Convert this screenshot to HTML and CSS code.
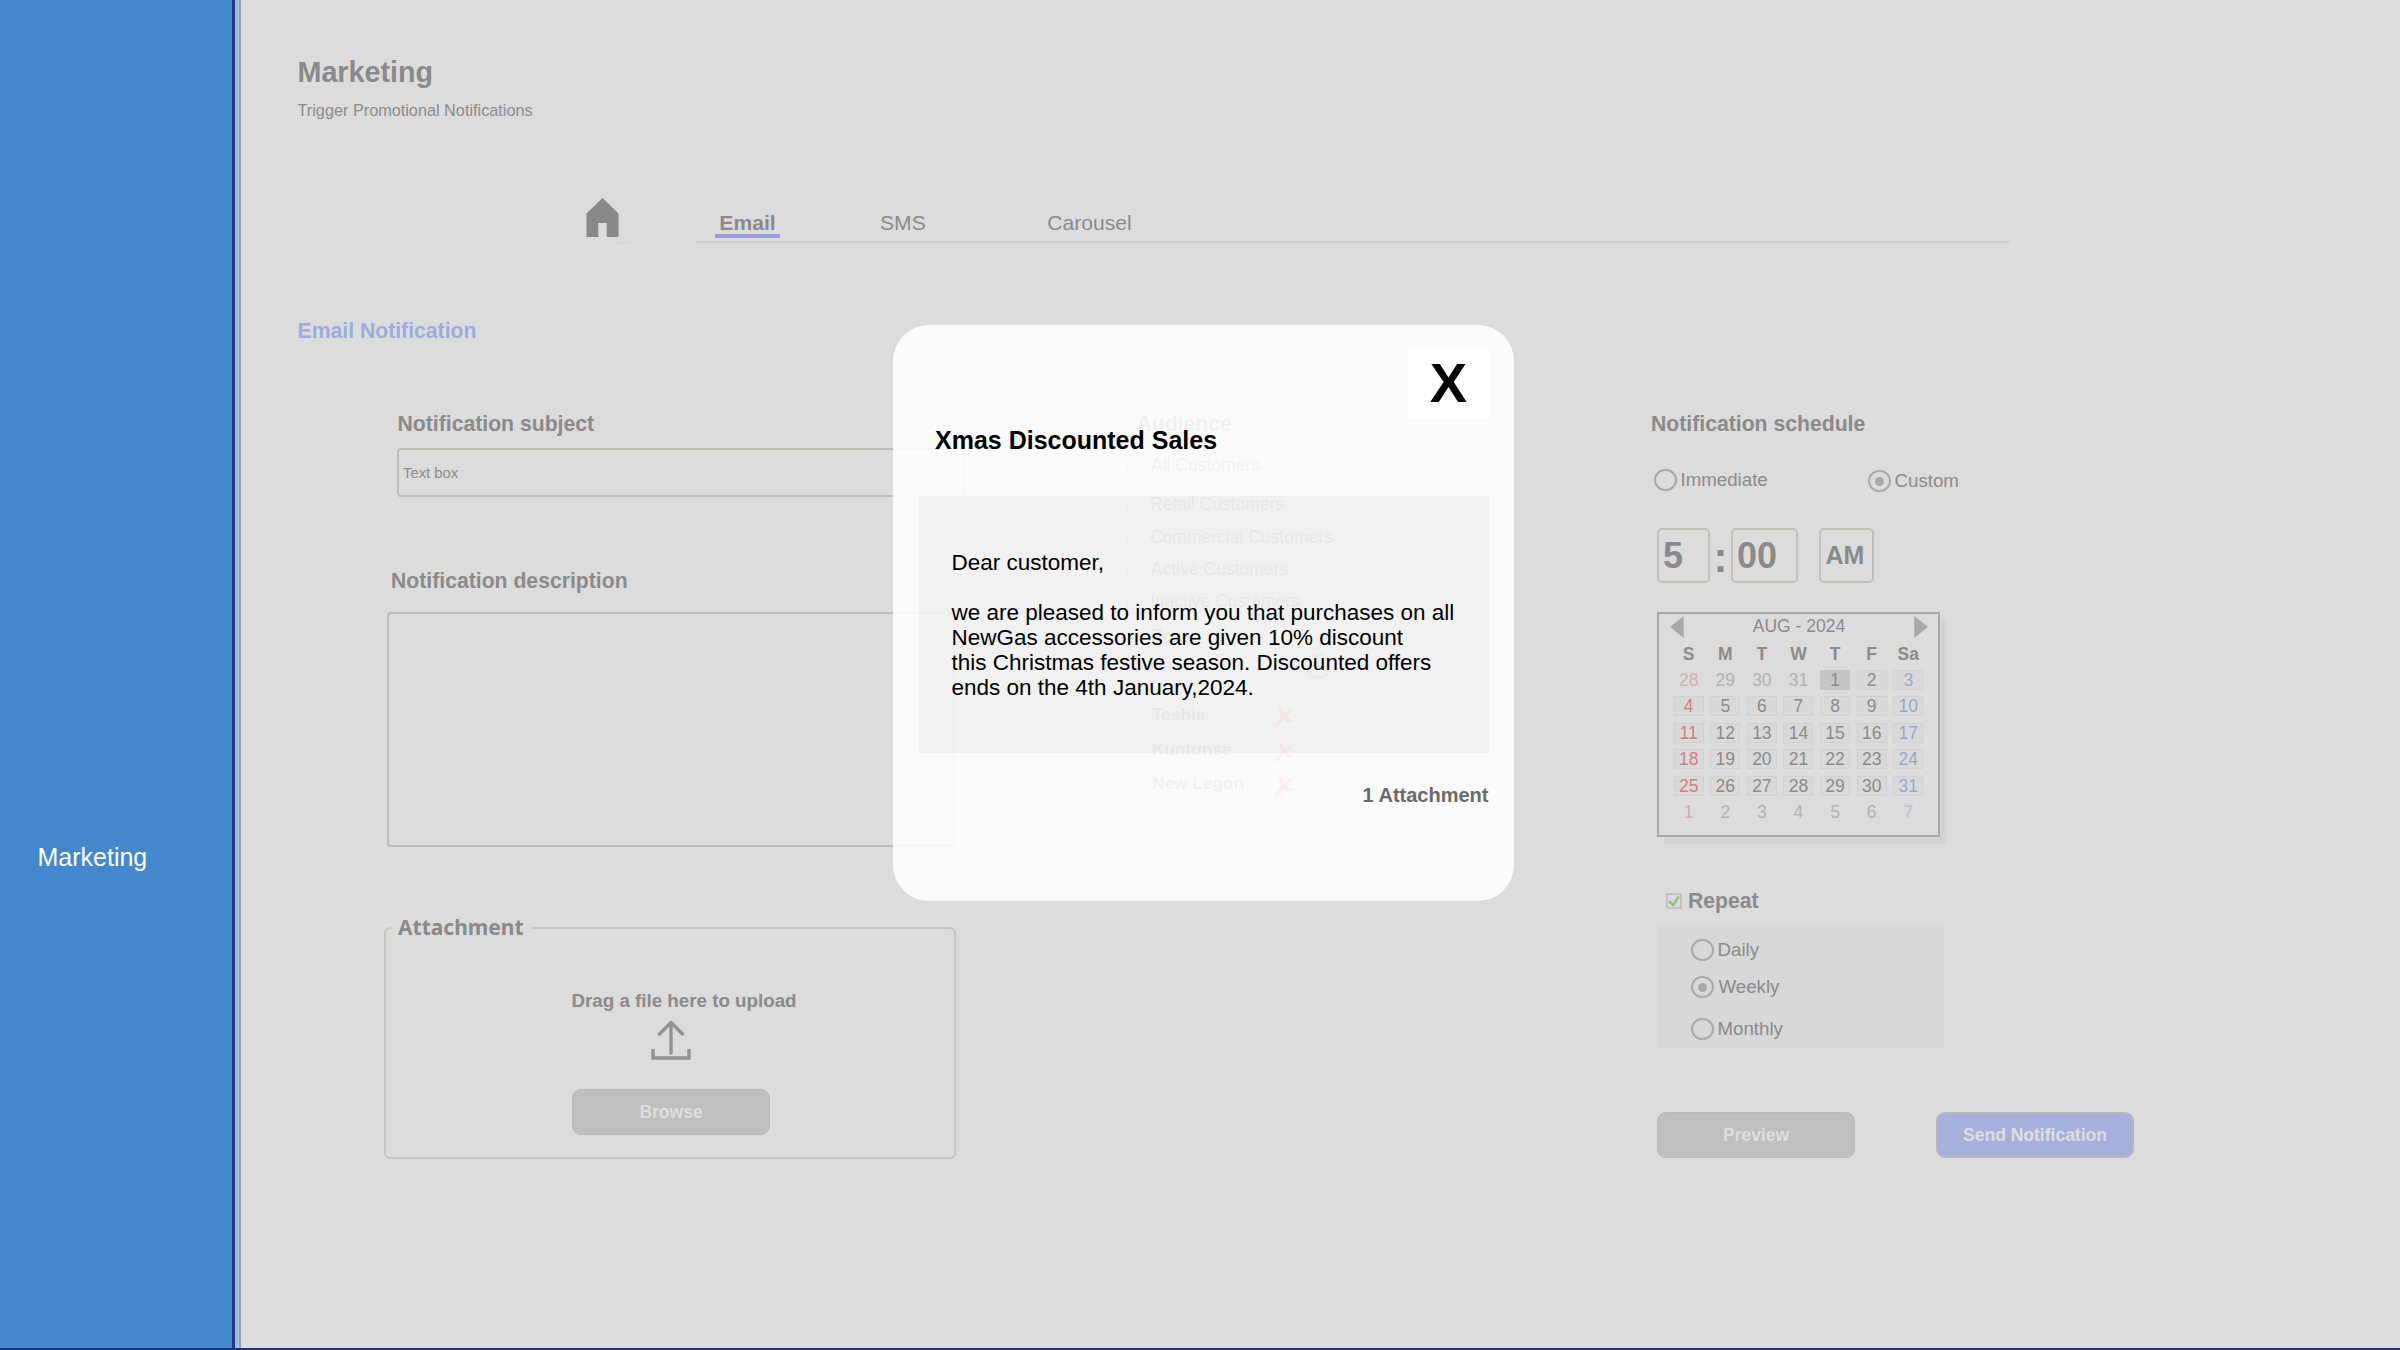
FILE: index.html
```html
<!DOCTYPE html>
<html lang="en">
<head>
<meta charset="utf-8">
<title>Marketing</title>
<link rel="stylesheet" href="styles.css">
</head>
<body>
<div class="app">
  <aside class="sidebar"><a class="sidebar-link">Marketing</a></aside>
  <div class="divider"></div>
  <main class="main">
    <h1>Marketing</h1>
    <p class="subtitle">Trigger Promotional Notifications</p>

    <nav class="nav">
      <svg class="home" width="46" height="48" viewBox="0 0 46 48">
        <path d="M0.5 17.5 16.5 2 32.5 17.5V41H20.7V27H12.3V41H0.5Z" fill="#898989"/>
        <path d="M30 46.7H44" stroke="#d6d6d6" stroke-width="2"/>
      </svg>
      <div class="tabs">
        <a class="tab active">Email</a>
        <a class="tab sms">SMS</a>
        <a class="tab carousel">Carousel</a>
      </div>
    </nav>

    <h2 class="section-title">Email Notification</h2>

    <div class="columns">
      <section class="compose">
        <h3 class="subject-label">Notification subject</h3>
        <div class="input">Text box</div>
        <h3 class="description-label">Notification description</h3>
        <div class="textarea"></div>
        <fieldset class="attachment">
          <legend>Attachment</legend>
          <div class="drop">
            <p>Drag a file here to upload</p>
            <svg width="40" height="41" viewBox="0 0 40 41" fill="none" stroke="#929292" stroke-width="3.4">
              <path d="M20 33V2.5M8.5 14 20 2.5 31.5 14" stroke-linejoin="round" stroke-linecap="round"/>
              <path d="M2 29V38H38V29"/>
            </svg>
            <button class="button">Browse</button>
          </div>
        </fieldset>
      </section>

      <section class="audience">
        <h3>Audience</h3>
        <div class="check all"><i></i>All Customers</div>
        <div class="check retail"><i></i>Retail Customers</div>
        <div class="check commercial"><i></i>Commercial Customers</div>
        <div class="check active-customers"><i></i>Active Customers</div>
        <div class="check inactive"><i></i>Inactive Customers</div>
        <div class="zone">
          <div class="zone-label">Zone</div>
          <div class="zone-row">
            <div class="select">Jaffa<b></b></div>
            <svg width="26" height="26" viewBox="0 0 26 26" fill="none" stroke="#a8a8a8" stroke-width="2.5"><circle cx="13" cy="13" r="11.7"/><path d="M13 7V19M7 13H19"/></svg>
          </div>
        </div>
        <div class="places">
          <div class="place"><span>Teshie</span><svg width="21" height="22" viewBox="0 0 21 22"><path d="M4 1 8 2 11 8 16 3 18 5 13 11 20 16 13 16 10 13 3 21 0 20 7 11Z" fill="#e58585"/></svg></div>
          <div class="place"><span>Kuntunse</span><svg width="21" height="22" viewBox="0 0 21 22"><path d="M4 1 8 2 11 8 16 3 18 5 13 11 20 16 13 16 10 13 3 21 0 20 7 11Z" fill="#e58585"/></svg></div>
          <div class="place"><span>New Legon</span><svg width="21" height="22" viewBox="0 0 21 22"><path d="M4 1 8 2 11 8 16 3 18 5 13 11 20 16 13 16 10 13 3 21 0 20 7 11Z" fill="#e58585"/></svg></div>
        </div>
      </section>

      <section class="schedule">
        <h3>Notification schedule</h3>
        <div class="when">
          <div class="radio immediate"><i></i>Immediate</div>
          <div class="radio on"><i></i>Custom</div>
        </div>
        <div class="time">
          <div class="time-box hour">5</div>
          <div class="colon">:</div>
          <div class="time-box minute">00</div>
          <div class="time-box period">AM</div>
        </div>
        <div class="calendar">
          <div class="month">
            <svg width="14" height="22" viewBox="0 0 14 22"><path d="M0 11 13.7 0V22Z" fill="#a9a9a9"/></svg>
            <span>AUG - 2024</span>
            <svg width="14" height="22" viewBox="0 0 14 22"><path d="M14 11 0.3 0V22Z" fill="#a9a9a9"/></svg>
          </div>
          <div class="week names"><b>S</b><b>M</b><b>T</b><b>W</b><b>T</b><b>F</b><b>Sa</b></div>
          <div class="week days">
            <span class="out">28</span><span class="out">29</span><span class="out">30</span><span class="out">31</span><span class="picked">1</span><span>2</span><span>3</span>
            <span>4</span><span>5</span><span>6</span><span>7</span><span>8</span><span>9</span><span>10</span>
            <span>11</span><span>12</span><span>13</span><span>14</span><span>15</span><span>16</span><span>17</span>
            <span>18</span><span>19</span><span>20</span><span>21</span><span>22</span><span>23</span><span>24</span>
            <span>25</span><span>26</span><span>27</span><span>28</span><span>29</span><span>30</span><span>31</span>
            <span class="out">1</span><span class="out">2</span><span class="out">3</span><span class="out">4</span><span class="out">5</span><span class="out">6</span><span class="out">7</span>
          </div>
        </div>
        <div class="repeat">
          <svg width="16" height="16" viewBox="0 0 16 16" fill="none"><rect x="1" y="1" width="14" height="14" stroke="#c0bfb6" stroke-width="1.6"/><path d="M3 8.2 7 12 12.8 3.5" stroke="#92c283" stroke-width="2.6"/></svg>
          <h3>Repeat</h3>
        </div>
        <div class="frequency">
          <div class="radio"><i></i>Daily</div>
          <div class="radio on weekly"><i></i>Weekly</div>
          <div class="radio monthly"><i></i>Monthly</div>
        </div>
        <div class="actions">
          <button class="button">Preview</button>
          <button class="button send">Send Notification</button>
        </div>
      </section>
    </div>
  </main>
</div>

<div class="modal">
  <button class="close">X</button>
  <h2 class="modal-title">Xmas Discounted Sales</h2>
  <div class="message">Dear customer,<br><br>we are pleased to inform you that purchases on all<br>NewGas accessories are given 10% discount<br>this Christmas festive season. Discounted offers<br>ends on the 4th January,2024.</div>
  <div class="modal-attachment">1 Attachment</div>
</div>
</body>
</html>
```
FILE: styles.css
```css
* { box-sizing: border-box; }

body {
  margin: 0;
  width: 2400px;
  height: 1350px;
  overflow: hidden;
  position: relative;
  background: #dcdcdc;
  color: #8a8a8a;
  font-family: "Liberation Sans", Arial, sans-serif;
  white-space: nowrap;
}

h1, h2, h3, p { margin: 0; }

h3 { font-size: 21.2px; line-height: 24px; }

button { font-family: inherit; padding: 0; }

.app {
  display: flex;
  height: 1350px;
  border-bottom: 2px solid #1d3280;
}

/* Sidebar */
.sidebar {
  width: 235px;
  padding: 843px 0 0 37.5px;
  background: #4388cd;
  border-right: 3px solid #23388c;
}

.sidebar-link {
  display: block;
  color: #fff;
  font-size: 25px;
  line-height: 28px;
}

.divider {
  width: 6px;
  background: #a9bbd2;
  border-right: 2px solid #969fbd;
}

/* Page header */
.main { flex: 1; padding: 56px 0 0 56px; }

h1 { margin-left: 0.5px; font-size: 28.7px; line-height: 32px; }

.subtitle {
  margin: 12px 0 0 0.5px;
  font-size: 16.25px;
  line-height: 20px;
}

.nav {
  display: flex;
  margin: 76px 0 0 289px;
  height: 48px;
}

.tabs {
  display: flex;
  width: 1314px;
  height: 47px;
  margin-left: 64px;
  padding: 15px 0 0 19px;
  border-bottom: 2px solid #cfcfcf;
}

.tab {
  height: 27px;
  font-size: 21.1px;
  line-height: 23px;
}

.tab.active {
  width: 65px;
  text-align: center;
  font-weight: bold;
  border-bottom: 4px solid #9d9cdd;
}

.sms { margin-left: 100px; }
.carousel { margin-left: 121.5px; }

.section-title {
  margin: 75px 0 0 0.5px;
  color: #9dabdd;
  font-size: 21.2px;
  line-height: 24px;
}

.columns {
  display: grid;
  grid-template-columns: 581px 227px 484px;
  column-gap: 156px;
  margin: 69px 0 0 87px;
}

/* Compose column */
.subject-label { margin-left: 13.5px; }

.input {
  width: 568px;
  height: 49px;
  margin: 12px 0 0 13px;
  padding-left: 4px;
  border: 2px solid #bfbcb6;
  border-radius: 4px;
  font-size: 14.8px;
  line-height: 47px;
}

.description-label { margin: 72px 0 0 7px; }

.textarea {
  width: 568px;
  height: 235px;
  margin: 19px 0 0 3px;
  border: 2px solid #c0bbb6;
  border-radius: 4px;
}

.attachment {
  width: 572px;
  height: 243px;
  margin: 69px 0 0;
  padding: 0;
  border: 2px solid #c6c6c0;
  border-radius: 6px;
}

legend {
  height: 24px;
  margin-left: 5px;
  padding: 0 7px;
  font: bold 21px/23px "Noto Sans", sans-serif;
}

.drop {
  display: flex;
  flex-direction: column;
  align-items: center;
  width: 198px;
  margin: 50px 0 0 186px;
}

.drop p {
  align-self: flex-start;
  margin-left: -0.5px;
  font-size: 18.75px;
  font-weight: bold;
  line-height: 22px;
}

.drop svg { margin: 8px 0 28px; }

.button {
  width: 198px;
  height: 46px;
  background: #bfbfbf;
  border: 1px solid #bababa;
  border-radius: 9px;
  color: #dedede;
  font-size: 17.5px;
  font-weight: bold;
}

.button.send {
  margin-left: 81px;
  background: #a5b1dc;
  border: 2px solid #b8b8b8;
}

/* Audience column */
.audience h3 { margin-left: 15.5px; }

.check {
  display: flex;
  align-items: center;
  gap: 8px;
  height: 20px;
  margin-left: 6px;
  font-size: 17.5px;
}

.check i {
  width: 15px;
  height: 15px;
  border: 1.5px solid #bdbab5;
}

.all { margin-top: 19px; gap: 9px; }
.retail { margin-top: 19px; }
.commercial { margin-top: 13px; }
.active-customers { margin-top: 12px; gap: 9px; }
.inactive { margin-top: 12px; }

.zone {
  height: 80px;
  margin-top: 1px;
  padding-top: 14px;
  background: #d8d8d8;
}

.zone-label {
  margin-left: 31px;
  font-size: 17.5px;
  line-height: 20px;
}

.zone-row {
  display: flex;
  align-items: center;
  gap: 5px;
  margin: 7px 0 0 6px;
}

.select {
  display: flex;
  justify-content: space-between;
  width: 173px;
  height: 23px;
  padding-left: 7px;
  border: 1.5px solid #c3c3c3;
  font-size: 17.5px;
  line-height: 20px;
}

.select b { width: 24px; background: #d2d6e2; }

.places { margin: 12px 0 0 31px; }

.place {
  display: flex;
  height: 34.5px;
  font-size: 17.3px;
  font-weight: bold;
  line-height: 20px;
}

.place span { width: 122px; }
.place svg { margin-top: 2px; }

/* Schedule column */
.schedule { margin-left: 147px; width: 484px; }

.radio {
  display: flex;
  align-items: center;
  gap: 4px;
  height: 22px;
  font-size: 18.7px;
  line-height: 22px;
}

.radio i {
  display: grid;
  place-items: center;
  width: 22.5px;
  height: 22.5px;
  border: 2.5px solid #a9a9a9;
  border-radius: 50%;
}

.radio.on i::after {
  content: "";
  width: 9px;
  height: 9px;
  border-radius: 50%;
  background: #a9a9a9;
}

.when {
  display: grid;
  grid-template-columns: 214px 1fr;
  margin: 33px 0 0 3px;
}

.when .on { margin-top: 1px; }

.time {
  display: flex;
  height: 55px;
  margin: 36px 0 0 6px;
}

.time-box {
  width: 53px;
  padding-left: 4px;
  border: 2px solid #c3c0ba;
  border-radius: 5px;
  font-size: 36px;
  font-weight: bold;
  line-height: 51px;
}

.minute { width: 67px; }
.period { width: 55px; margin-left: 21px; padding-left: 4.5px; font-size: 25px; }

.colon {
  width: 21px;
  padding-top: 2px;
  text-align: center;
  font-size: 42px;
  font-weight: bold;
  line-height: 55px;
}

.calendar {
  width: 283px;
  height: 225px;
  margin: 28.5px 0 0 6px;
  padding: 2px 10px 0 14.7px;
  border: 2px solid #a9a9a9;
  background: #dcdcdc;
  box-shadow: 7px 7px 0 #d4d4d4;
  font-size: 17.5px;
}

.month {
  display: flex;
  justify-content: space-between;
  height: 22px;
  margin-left: -3.7px;
  line-height: 20px;
}

.week {
  display: grid;
  grid-template-columns: repeat(7, 30px);
  column-gap: 6.6px;
  text-align: center;
  line-height: 20px;
}

.names { margin: 6px 0; }

.days { row-gap: 6.5px; }

.days span {
  height: 20px;
  border: 1px solid #d1d1d1;
  background: #d9d9d9;
  line-height: 18px;
}

.days span:nth-child(7n+1) { color: #d07f7f; }
.days span:nth-child(7n) { color: #99a6cb; }

.days .out {
  border-color: transparent;
  background: none;
  opacity: 0.5;
}

.days .picked { background: #c6c6c6; border-color: #c6c6c6; }

.repeat {
  display: flex;
  align-items: center;
  gap: 6px;
  margin: 52.5px 0 0 15px;
}

.frequency {
  width: 287px;
  height: 124px;
  margin: 12px 0 0 6px;
  padding: 14px 0 0 34px;
  background: #d8d8d8;
}

.weekly { margin-top: 15px; gap: 5px; }
.monthly { margin-top: 20px; }

.actions { display: flex; margin: 63px 0 0 6px; }

/* Preview dialog */
.modal {
  position: absolute;
  left: 893px;
  top: 325px;
  width: 621px;
  height: 576px;
  border-radius: 36px;
  background: rgba(254, 254, 254, 0.88);
}

.close {
  display: block;
  width: 81px;
  height: 72.5px;
  margin: 21px 25px 0 auto;
  border: 0;
  border-radius: 3px;
  background: #fff;
  color: #000;
  font-size: 56px;
  font-weight: bold;
}

.modal-title {
  margin: 7.5px 0 0 42px;
  color: #000;
  font-size: 25px;
  line-height: 28px;
}

.message {
  width: 570px;
  height: 256.5px;
  margin: 42px 0 0 26px;
  padding: 53.5px 0 0 32.5px;
  background: rgba(0, 0, 0, 0.035);
  color: #000;
  font-size: 22.5px;
  line-height: 25px;
}

.modal-attachment {
  margin: 30px 25.5px 0 0;
  color: #6a6a6a;
  font-size: 20px;
  font-weight: bold;
  line-height: 24px;
  text-align: right;
}
```
